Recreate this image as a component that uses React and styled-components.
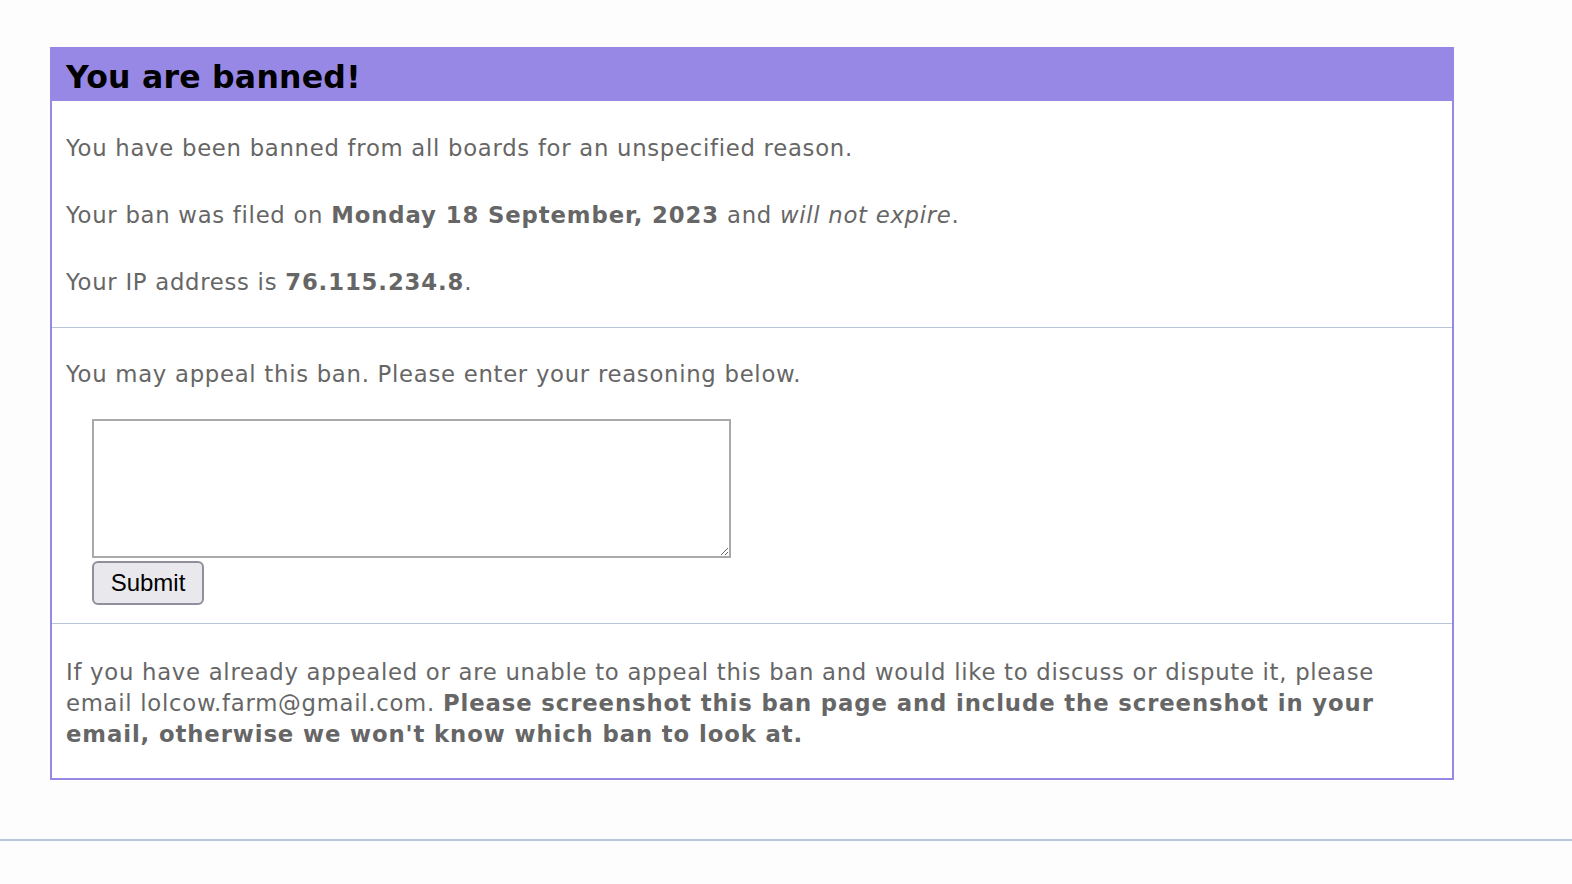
import React from "react";
import styled, { createGlobalStyle } from "styled-components";

const Global = createGlobalStyle`
  html, body { margin: 0; padding: 0; background: #fdfdfd; }
  body { font-family: "DejaVu Sans", Verdana, sans-serif; }
`;

const Page = styled.div`
  padding-top: 47px;
  min-height: 884px;
  box-sizing: border-box;
`;

const Box = styled.section`
  margin-left: 50px;
  width: 1404px;
  box-sizing: border-box;
  border: 2px solid #9788e5;
  border-top: none;
  background: #fff;
`;

const Header = styled.h2`
  margin: 0 -2px;
  background: #9788e5;
  height: 54px;
  box-sizing: border-box;
  padding: 5px 16px 0;
  display: flex;
  align-items: center;
  font-size: 31.5px;
  letter-spacing: 0.25px;
  font-weight: bold;
  color: #000;
`;

const Section = styled.div`
  padding: ${(p) => p.$pad || "32px 14px 29px"};
  border-top: ${(p) => (p.$divider ? "1px solid #b7c5d9" : "none")};
  color: #666;
  font-size: 22.75px;
  letter-spacing: 0.72px;
  line-height: 31px;

  b { letter-spacing: 0.9px; }
`;

const P = styled.p`
  margin: 0;
  & + & { margin-top: 36px; }
`;

const Form = styled.form`
  margin: 29px 0 0 26px;
  display: flex;
  flex-direction: column;
  align-items: flex-start;
  gap: 3px;
`;

const TextArea = styled.textarea`
  width: 639px;
  height: 139px;
  box-sizing: border-box;
  border: 2px solid #a9a9a9;
  background: #fff;
  margin: 0;
  display: block;
`;

const Button = styled.button`
  height: 44px;
  width: 112px;
  box-sizing: border-box;
  font-family: "Liberation Sans", Arial, sans-serif;
  font-size: 24px;
  letter-spacing: 0;
  color: #000;
  background: #e9e9ed;
  border: 2px solid #8f8f9d;
  border-radius: 6px;
  padding: 0;
`;

const Rule = styled.hr`
  margin: 59px 0 0;
  border: none;
  border-top: 2px solid #b7c5d9;
`;

export default function App() {
  return (
    <>
      <Global />
      <Page>
        <Box>
          <Header>You are banned!</Header>
          <Section>
            <P>You have been banned from all boards for an unspecified reason.</P>
            <P>
              Your ban was filed on <b>Monday 18 September, 2023</b> and <i>will not expire</i>.
            </P>
            <P>
              Your IP address is <b>76.115.234.8</b>.
            </P>
          </Section>
          <Section $divider $pad="31px 14px 18px">
            <P>You may appeal this ban. Please enter your reasoning below.</P>
            <Form onSubmit={(e) => e.preventDefault()}>
              <TextArea />
              <Button type="submit">Submit</Button>
            </Form>
          </Section>
          <Section $divider $pad="33px 14px 28px">
            <P>
              If you have already appealed or are unable to appeal this ban and would like to discuss or dispute it, please email lolcow.farm@gmail.com.{" "}
              <b>Please screenshot this ban page and include the screenshot in your email, otherwise we won't know which ban to look at.</b>
            </P>
          </Section>
        </Box>
        <Rule />
      </Page>
    </>
  );
}
